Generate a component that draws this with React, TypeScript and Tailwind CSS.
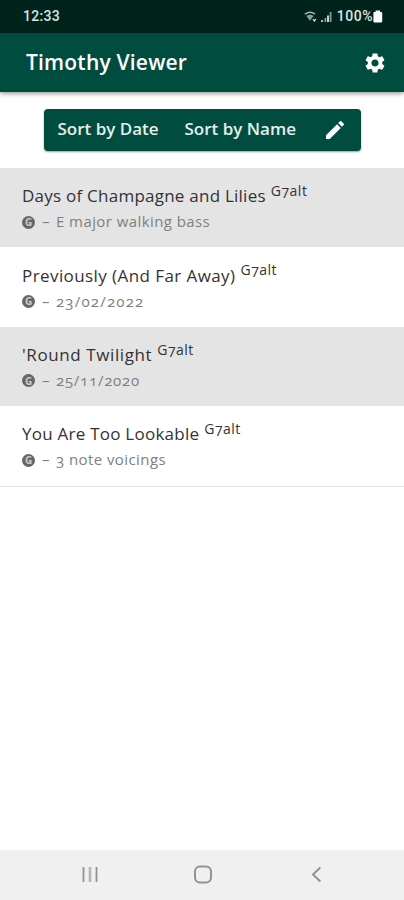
import { MdEdit, MdSettings } from 'react-icons/md'

interface Song {
  title: string
  titleClass: string
  tag: string
  detail: string
  detailClass: string
}

const songs: Song[] = [
  {
    title: 'Days of Champagne and Lilies',
    titleClass: 'tracking-[0.24px]',
    tag: 'G7alt',
    detail: 'E major walking bass',
    detailClass: 'tracking-[0.42px]',
  },
  {
    title: 'Previously (And Far Away)',
    titleClass: 'tracking-[0.42px]',
    tag: 'G7alt',
    detail: '23/02/2022',
    detailClass: 'tracking-[1.2px]',
  },
  {
    title: "'Round Twilight",
    titleClass: 'tracking-[0.6px]',
    tag: 'G7alt',
    detail: '25/11/2020',
    detailClass: 'tracking-[0.75px]',
  },
  {
    title: 'You Are Too Lookable',
    titleClass: 'tracking-[0.24px]',
    tag: 'G7alt',
    detail: '3 note voicings',
    detailClass: 'tracking-[0.42px]',
  },
]

function StatusBar() {
  return (
    <div className="flex h-[33px] items-center justify-between bg-[#00241b] pr-[21px] pl-[23px] font-['Roboto',sans-serif] text-[14px] font-medium text-[#dde3e1]">
      <span className="tracking-[0.3px]">12:33</span>
      <div className="flex items-center">
        <svg width="14" height="12" viewBox="0 0 14 12" className="mr-[3px]">
          <path d="M0.8 3.2 Q6 -0.6 11.2 3.2" fill="none" stroke="#a9b5b1" strokeWidth="1.4" />
          <path d="M2.4 5 Q6 2.4 9.6 5 L6 9.8 Z" fill="#8d9c97" />
          <path d="M9 8.2L10.4 10L11.8 8.2" fill="none" stroke="#dde3e1" strokeWidth="1.3" />
        </svg>
        <svg width="11" height="11" viewBox="0 0 11 11" className="mr-[5px]">
          <path d="M1 9v2" stroke="#c7d0cd" strokeWidth="1.8" />
          <path d="M4.4 7v4" stroke="#9aa8a3" strokeWidth="1.6" />
          <path d="M7 4.4v6.6" stroke="#c7d0cd" strokeWidth="2" />
          <path d="M9.6 1v10" stroke="#7f908a" strokeWidth="2" />
        </svg>
        <span className="tracking-[0.5px]">100%</span>
        <svg width="10" height="13" viewBox="0 0 10 13">
          <path d="M2.6 0.5h4.4v1.4h1.2a1 1 0 0 1 1 1v8.6a1 1 0 0 1-1 1H1.4a1 1 0 0 1-1-1V2.9a1 1 0 0 1 1-1h1.2z" fill="#fff" />
        </svg>
      </div>
    </div>
  )
}

function SortBar() {
  return (
    <div className="mx-auto mt-[17px] flex h-[42px] w-[317px] items-center rounded bg-[#004d3f] px-[14px] text-[17px] font-semibold text-[#e6eeeb] shadow-[0_1px_2px_rgba(0,0,0,0.4)]">
      <button className="w-[127px] pb-[2px] text-left whitespace-nowrap">Sort by Date</button>
      <button className="pb-[2px] text-left whitespace-nowrap">Sort by Name</button>
      <MdEdit className="ml-auto size-6 text-white" />
    </div>
  )
}

function SongRow({ song }: { song: Song }) {
  return (
    <li className="h-[79.4px] pt-[15px] pl-[22px] odd:bg-[#e4e4e4]">
      <div className="flex h-[26px] items-center text-[17px] whitespace-nowrap text-[#333]">
        <span className={song.titleClass}>{song.title}</span>
        <span className="relative -top-[5.5px] ml-[5px] text-[14px] tracking-[0.5px]">{song.tag}</span>
      </div>
      <div className="flex h-[26px] items-center text-[15px] whitespace-nowrap text-[#808080]">
        <span className="flex size-[13px] items-center justify-center rounded-full bg-[#666] text-[10px] leading-none font-bold text-[#ccc]">
          G
        </span>
        <span className="ml-[7px] w-[14px] pb-px">–</span>
        <span className={`${song.detailClass} pb-px`}>{song.detail}</span>
      </div>
    </li>
  )
}

export default function App() {
  return (
    <div className="flex h-[900px] w-[404px] flex-col overflow-hidden bg-white font-['Open_Sans','Noto_Sans',sans-serif]">
      <StatusBar />
      <header className="flex h-[59px] shrink-0 items-center justify-between bg-[#004d3f] pr-[17px] pl-[26px] text-white shadow-[0_1px_5px_rgba(0,0,0,0.5)]">
        <h1 className="text-[21px] font-semibold tracking-[0.2px] whitespace-nowrap">Timothy Viewer</h1>
        <MdSettings className="size-6" />
      </header>
      <SortBar />
      <ul className="mt-[17px] border-b border-[#e4e4e4] [font-feature-settings:'onum']">
        {songs.map((song) => (
          <SongRow key={song.title} song={song} />
        ))}
      </ul>
      <nav className="mt-auto flex h-[50px] items-center bg-[#f0f0f0]">
        <svg width="404" height="50" viewBox="0 0 404 50" fill="none" stroke="#929292">
          <path d="M83.5 17v15M96.5 17v15" strokeWidth="1.8" />
          <path d="M90 17v15" stroke="#b5b5b5" strokeWidth="2.6" />
          <rect x="195" y="16.5" width="16" height="16" rx="5" strokeWidth="2" />
          <path d="M320.3 17.5 L313 24.5 L320.3 31.5" strokeWidth="2" />
        </svg>
      </nav>
    </div>
  )
}
